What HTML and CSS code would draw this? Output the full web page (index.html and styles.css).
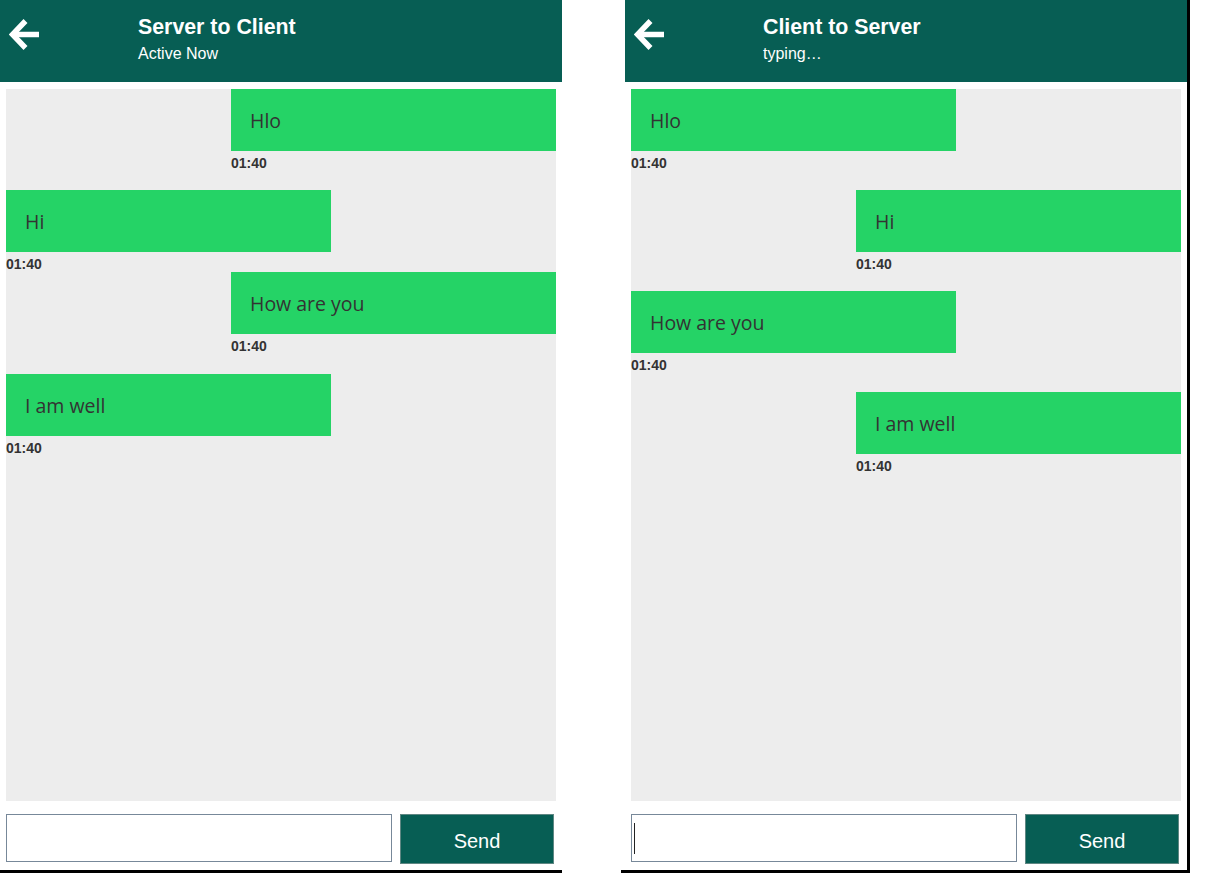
FILE: index.html
```html
<!DOCTYPE html>
<html lang="en">
<head>
<meta charset="utf-8">
<title>Chat</title>
<link rel="stylesheet" href="styles.css">
</head>
<body>
  <div class="window">
    <div class="panel">
      <header class="head">
        <div class="back">
          <svg width="32" height="32" viewBox="0 0 32 32"><path d="M3 15.5 H30" stroke="#fff" stroke-width="5.5" fill="none"/><path d="M16.5 2 L3.5 15.5 L16.5 29" stroke="#fff" stroke-width="5.5" fill="none" stroke-linejoin="miter"/></svg>
        </div>
        <div class="titles">
          <div class="title">Server to Client</div>
          <div class="sub">Active Now</div>
        </div>
      </header>
      <main class="chat">
        <div class="msg right"><div class="bubble">Hlo</div><div class="time">01:40</div></div>
        <div class="msg left gap"><div class="bubble">Hi</div><div class="time">01:40</div></div>
        <div class="msg right"><div class="bubble">How are you</div><div class="time">01:40</div></div>
        <div class="msg left gap2"><div class="bubble">I am well</div><div class="time">01:40</div></div>
      </main>
      <div class="compose">
        <div class="field"></div>
        <button class="send">Send</button>
      </div>
    </div>
  </div>
  <div class="window second">
    <div class="panel">
      <header class="head">
        <div class="back">
          <svg width="32" height="32" viewBox="0 0 32 32"><path d="M3 15.5 H30" stroke="#fff" stroke-width="5.5" fill="none"/><path d="M16.5 2 L3.5 15.5 L16.5 29" stroke="#fff" stroke-width="5.5" fill="none" stroke-linejoin="miter"/></svg>
        </div>
        <div class="titles">
          <div class="title">Client to Server</div>
          <div class="sub">typing…</div>
        </div>
      </header>
      <main class="chat">
        <div class="msg left"><div class="bubble">Hlo</div><div class="time">01:40</div></div>
        <div class="msg right gap"><div class="bubble">Hi</div><div class="time">01:40</div></div>
        <div class="msg left gap"><div class="bubble">How are you</div><div class="time">01:40</div></div>
        <div class="msg right gap"><div class="bubble">I am well</div><div class="time">01:40</div></div>
      </main>
      <div class="compose">
        <div class="field"><span class="caret"></span></div>
        <button class="send">Send</button>
      </div>
    </div>
  </div>
</body>
</html>
```
FILE: styles.css
```css
html, body {
  margin: 0;
  padding: 0;
  background: #ffffff;
}
body {
  display: flex;
  align-items: flex-start;
  gap: 59px;
  font-family: "Liberation Sans", Arial, sans-serif;
}
.window {
  border-bottom: 3px solid #000;
}
.window.second {
  padding-left: 4px;
  border-right: 3px solid #000;
}
.panel {
  width: 562px;
  height: 870px;
  display: flex;
  flex-direction: column;
}
.head {
  height: 82px;
  box-sizing: border-box;
  background: #075e54;
  display: flex;
  align-items: flex-start;
  color: #fff;
}
.back {
  width: 138px;
  padding: 19px 0 0 9px;
  box-sizing: border-box;
  flex: none;
}
.back svg {
  display: block;
}
.titles {
  padding-top: 15px;
}
.title {
  font-weight: bold;
  font-size: 21.33px;
  line-height: 24px;
}
.sub {
  font-size: 16px;
  line-height: 18px;
  margin-top: 6px;
}
.chat {
  margin: 7px 6px 0 6px;
  height: 712px;
  background: #ededed;
  display: flex;
  flex-direction: column;
}
.msg {
  width: 325px;
}
.msg.right {
  align-self: flex-end;
}
.msg.left {
  align-self: flex-start;
}
.msg.gap {
  margin-top: 19px;
}
.msg.gap2 {
  margin-top: 20px;
}
.bubble {
  background: #25d366;
  color: #333333;
  font-family: "Open Sans", "Noto Sans", sans-serif;
  font-size: 19.5px;
  line-height: 22px;
  padding: 21px 19px 19px 19px;
}
.time {
  font-family: "Liberation Sans", Arial, sans-serif;
  font-weight: bold;
  font-size: 14px;
  line-height: 16px;
  padding-top: 4px;
  color: #333333;
}
.compose {
  margin: 13px 0 0 6px;
  display: flex;
  align-items: flex-start;
  gap: 8px;
}
.field {
  width: 386px;
  height: 48px;
  box-sizing: border-box;
  border: 1px solid #778899;
  background: #fff;
  display: flex;
  align-items: center;
  padding-left: 2px;
}
.caret {
  width: 1px;
  height: 31px;
  background: #222;
}
.send {
  width: 154px;
  height: 50px;
  box-sizing: border-box;
  border: 1px solid #5f8783;
  background: #075e54;
  color: #fff;
  font-family: "Liberation Sans", Arial, sans-serif;
  font-size: 20px;
  padding: 4px 0 0 0;
  margin: 0;
}
```
